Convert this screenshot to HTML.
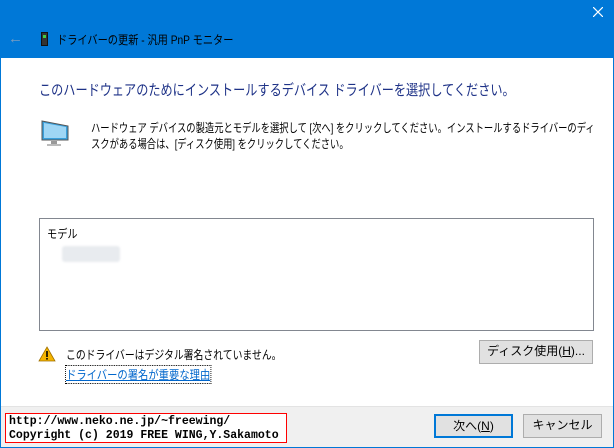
<!DOCTYPE html>
<html><head><meta charset="utf-8"><style>
*{margin:0;padding:0;box-sizing:border-box}
body{width:614px;height:448px;overflow:hidden;background:#0078d7;font-family:"Liberation Sans","Noto Sans CJK JP",sans-serif;font-size:12px;color:#000;position:relative}
.win{position:absolute;left:1px;top:58px;width:612px;height:389px;background:#fff}
.foot{position:absolute;left:1px;top:406px;width:612px;height:41px;background:#f0f0f0;border-top:1px solid #e3e3e3}
.abs{position:absolute;white-space:nowrap;transform-origin:0 0}
.btn{position:absolute;background:#e1e1e1;border:1px solid #adadad;text-align:center;font-size:12px;line-height:21px;white-space:nowrap}
</style></head><body>
<svg class="abs" style="left:593px;top:7px" width="10" height="10" viewBox="0 0 10 10"><path d="M0 0L10 10M10 0L0 10" stroke="#fff" stroke-width="1.2"/></svg>
<div class="abs" style="left:8px;top:30px;color:#7a9cc0;font-size:15px">←</div>
<div class="abs" style="left:41px;top:32px;width:7px;height:14px;background:#333;border:1px solid #111"></div>
<div class="abs" style="left:43px;top:35px;width:3px;height:3px;background:#4c4"></div>
<div class="abs" style="left:57px;top:31px;font-size:12px;color:#000;transform:scaleX(.85)">ドライバーの更新 - 汎用 PnP モニター</div>
<div class="win"></div>
<div class="abs" style="left:39px;top:79px;font-size:15px;color:#1e3287;transform:scaleX(.81)">このハードウェアのためにインストールするデバイス ドライバーを選択してください。</div>
<svg class="abs" style="left:40px;top:118px" width="30" height="30" viewBox="0 0 30 30"><path d="M2 3 L28 8 L28 22 L2 22 Z" fill="#3aa0dc" stroke="#555" stroke-width="1"/><path d="M4 5 L26 9 L26 20 L4 20Z" fill="#9fd6f5"/><rect x="11" y="23" width="6" height="3" fill="#999"/><rect x="7" y="26" width="14" height="2" fill="#bbb"/></svg>
<div class="abs" style="left:91px;top:120px;line-height:16px;transform:scaleX(.775)">ハードウェア デバイスの製造元とモデルを選択して [次へ] をクリックしてください。インストールするドライバーのディ<br>スクがある場合は、[ディスク使用] をクリックしてください。</div>
<div class="abs" style="left:39px;top:218px;width:555px;height:113px;border:1px solid #828790;background:#fff"></div>
<div class="abs" style="left:47px;top:225px;transform:scaleX(.85)">モデル</div>
<div class="abs" style="left:62px;top:246px;width:58px;height:16px;background:#e8ebef;border-radius:3px;filter:blur(1px)"></div>
<svg class="abs" style="left:38px;top:346px" width="18" height="16" viewBox="0 0 18 16"><path d="M9 1 L17 15 L1 15Z" fill="#f4b400" stroke="#a07000" stroke-width=".8"/><rect x="8.2" y="5" width="1.6" height="6" fill="#000"/><rect x="8.2" y="12" width="1.6" height="1.6" fill="#000"/></svg>
<div class="abs" style="left:66px;top:346px;transform:scaleX(.82)">このドライバーはデジタル署名されていません。</div>
<div class="abs" style="left:66px;top:366px;color:#0066cc;text-decoration:underline;outline:1px dotted #000;transform:scaleX(.86)">ドライバーの署名が重要な理由</div>
<div class="btn" style="left:479px;top:340px;width:114px;height:24px">ディスク使用(<u>H</u>)...</div>
<div class="foot"></div>
<div class="btn" style="left:434px;top:414px;width:79px;height:24px;border:2px solid #0078d7;line-height:20px">次へ(<u>N</u>)</div>
<div class="btn" style="left:523px;top:414px;width:79px;height:24px">キャンセル</div>
<div class="abs" style="left:5px;top:413px;width:282px;height:30px;border:1px solid #f00;background:#fff"></div>
<div class="abs" style="left:9px;top:414px;font-family:'Liberation Mono',monospace;font-size:12px;line-height:14px;font-weight:bold;transform:scaleX(.96)">http://www.neko.ne.jp/~freewing/<br>Copyright (c) 2019 FREE WING,Y.Sakamoto</div>
</body></html>
